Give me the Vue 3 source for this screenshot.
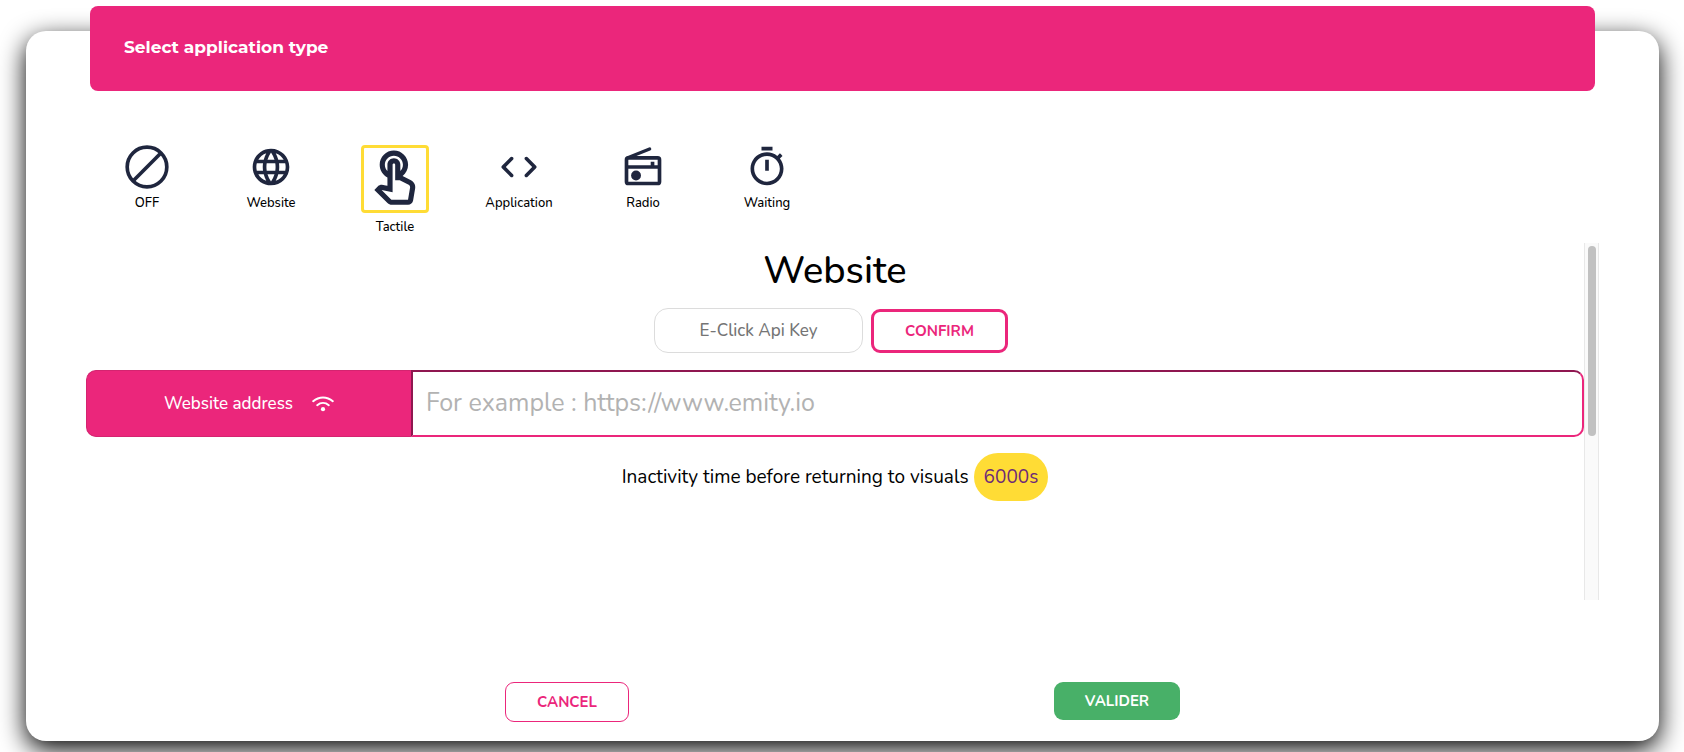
<template>
  <div class="page">
    <form class="card" @submit.prevent>
      <header class="card-header">
        <h1>Select application type</h1>
      </header>

      <nav class="types" aria-label="Application type">
        <button
          v-for="type in types"
          :key="type.label"
          type="button"
          class="type"
          :class="{ 'type--active': type.label === selected }"
          @click="selected = type.label"
        >
          <span class="type-icon">
            <svg viewBox="0 0 24 24" aria-hidden="true">
              <path v-if="type.path" :d="type.path" fill="currentColor" />
              <g v-else-if="type.label === 'OFF'" fill="none" stroke="currentColor" stroke-width="2">
                <circle cx="12" cy="12" r="10.8" />
                <path d="M4.4 19.6 19.6 4.4" />
              </g>
              <g v-else fill="none" stroke="currentColor" stroke-width="2">
                <rect x="3" y="7" width="18" height="14" rx="1" />
                <path d="M3 12h18M17.2 9.2V12" />
                <path d="M4 6.8 15.6 2.2" stroke-width="1.8" stroke-linecap="round" />
                <circle cx="8.2" cy="16.6" r="2.7" fill="currentColor" stroke="none" />
              </g>
            </svg>
          </span>
          <span class="type-label">{{ type.label }}</span>
        </button>
      </nav>

      <div class="panel">
        <div class="panel-content">
          <h2>Website</h2>

          <div class="api">
            <input v-model="apiKey" class="api-key" type="text" placeholder="E-Click Api Key" aria-label="E-Click Api Key" />
            <button type="button" class="btn btn--confirm">CONFIRM</button>
          </div>

          <div class="address">
            <label for="address" class="address-label">
              Website address
              <svg class="wifi" viewBox="0 0 22 16" aria-hidden="true">
                <g fill="none" stroke="currentColor" stroke-width="2" stroke-linecap="round">
                  <path d="M1.2 5.2C7 .1 15 .1 20.8 5.2" />
                  <path d="M5.2 9.2c3.5-3 8.1-3 11.6 0" />
                </g>
                <circle cx="11" cy="13.2" r="2.1" fill="currentColor" />
              </svg>
            </label>
            <input
              id="address"
              v-model="address"
              class="address-input"
              type="text"
              placeholder="For example : https://www.emity.io"
            />
          </div>

          <p class="inactivity">
            <span>Inactivity time before returning to visuals</span>
            <span class="pill">6000s</span>
          </p>
        </div>
        <div class="scrollbar"><div class="scrollbar-thumb"></div></div>
      </div>

      <footer class="actions">
        <button type="button" class="btn btn--cancel">CANCEL</button>
        <button type="submit" class="btn btn--valid">VALIDER</button>
      </footer>
    </form>
  </div>
</template>

<script setup>
import { ref } from 'vue'

const selected = ref('Tactile')
const apiKey = ref('')
const address = ref('')

const types = [
  { label: 'OFF' },
  {
    label: 'Website',
    path: 'M11.99 2C6.47 2 2 6.48 2 12s4.47 10 9.99 10C17.52 22 22 17.52 22 12S17.52 2 11.99 2zm6.93 6h-2.95c-.32-1.25-.78-2.45-1.38-3.56 1.84.63 3.37 1.91 4.33 3.56zM12 4.04c.83 1.2 1.48 2.53 1.91 3.96h-3.82c.43-1.43 1.08-2.76 1.91-3.96zM4.26 14C4.1 13.36 4 12.69 4 12s.1-1.36.26-2h3.38c-.08.66-.14 1.32-.14 2 0 .68.06 1.34.14 2H4.26zm.82 2h2.95c.32 1.25.78 2.45 1.38 3.56-1.84-.63-3.37-1.9-4.33-3.56zm2.95-8H5.08c.96-1.66 2.49-2.93 4.33-3.56C8.81 5.55 8.35 6.75 8.03 8zM12 19.96c-.83-1.2-1.48-2.53-1.91-3.96h3.82c-.43 1.43-1.08 2.76-1.91 3.96zM14.34 14H9.66c-.09-.66-.16-1.32-.16-2 0-.68.07-1.35.16-2h4.68c.09.65.16 1.32.16 2 0 .68-.07 1.34-.16 2zm.25 5.56c.6-1.11 1.06-2.31 1.38-3.56h2.95c-.96 1.65-2.49 2.93-4.33 3.56zM16.36 14c.08-.66.14-1.32.14-2 0-.68-.06-1.34-.14-2h3.38c.16.64.26 1.31.26 2s-.1 1.36-.26 2h-3.38z'
  },
  {
    label: 'Tactile',
    path: 'M18.19 12.44l-3.24-1.62c1.29-1 2.12-2.56 2.12-4.32 0-3.03-2.47-5.5-5.5-5.5s-5.5 2.47-5.5 5.5c0 2.13 1.22 3.98 3 4.89v3.26c-2.11-.45-2.01-.44-2.26-.44-.53 0-1.03.21-1.41.59L4 16.22l5.09 5.09c.43.44 1.03.69 1.65.69h6.3c.98 0 1.81-.7 1.97-1.67l.8-4.71c.22-1.3-.43-2.58-1.62-3.18zm-.35 2.85-.8 4.71h-6.3c-.09 0-.17-.04-.24-.1l-3.68-3.68 4.25.89V6.5c0-.28.22-.5.5-.5s.5.22.5.5v6h1.76l3.46 1.73c.4.2.62.63.55 1.06zM8.07 6.5c0-1.93 1.57-3.5 3.5-3.5s3.5 1.57 3.5 3.5c0 .95-.38 1.81-1 2.44V6.5c0-1.38-1.12-2.5-2.5-2.5s-2.5 1.12-2.5 2.5v2.44c-.62-.63-1-1.49-1-2.44z'
  },
  {
    label: 'Application',
    path: 'M8.7 15.9 4.8 12l3.9-3.9c.39-.39.39-1.01 0-1.4-.39-.39-1.01-.39-1.4 0l-4.59 4.59c-.39.39-.39 1.02 0 1.41l4.59 4.6c.39.39 1.01.39 1.4 0 .39-.39.39-1.01 0-1.4zm6.6 0 3.9-3.9-3.9-3.9c-.39-.39-.39-1.01 0-1.4.39-.39 1.01-.39 1.4 0l4.59 4.59c.39.39.39 1.02 0 1.41l-4.59 4.6c-.39.39-1.01.39-1.4 0-.39-.39-.39-1.01 0-1.4z'
  },
  { label: 'Radio' },
  {
    label: 'Waiting',
    path: 'M15 1H9v2h6V1zm-4 13h2V8h-2v6zm8.03-6.61 1.42-1.42c-.43-.51-.9-.99-1.41-1.41l-1.42 1.42C16.07 4.74 14.12 4 12 4c-4.97 0-9 4.03-9 9s4.02 9 9 9 9-4.03 9-9c0-2.12-.74-4.07-1.97-5.61zM12 20c-3.87 0-7-3.13-7-7s3.13-7 7-7 7 3.13 7 7-3.13 7-7 7z'
  }
]
</script>

<style>
body {
  background: #fff;
}
</style>

<style scoped>
.page {
  display: flex;
  min-height: 100vh;
  box-sizing: border-box;
  padding: 31px 25px 11px 26px;
  overflow: hidden;
  font-family: Nunito, Lato, sans-serif;
  font-weight: 500;
  color: #000;
}

.page *,
.page *::before {
  box-sizing: border-box;
}

.card {
  flex: 1;
  display: flex;
  flex-direction: column;
  min-width: 0;
  background: #fff;
  border-radius: 20px;
  box-shadow: 0 8px 26px #000;
}

.card-header {
  display: flex;
  align-items: center;
  height: 85px;
  margin: -25px 64px 0;
  padding: 0 34px;
  border-radius: 8px;
  background: #eb267b;
  color: #fff;
}

h1 {
  margin: 0 0 4px;
  font-family: Montserrat, "Open Sans", sans-serif;
  font-size: 17px;
  font-weight: 700;
  line-height: 24px;
}

/* Application types */
.types {
  display: flex;
  align-items: flex-start;
  height: 98px;
  margin: 54px 59px 0;
}

.type {
  display: flex;
  flex-direction: column;
  align-items: center;
  flex: 0 1 124px;
  padding: 0;
  border: 0;
  background: none;
  color: #000;
  font: inherit;
  cursor: pointer;
}

.type-icon {
  width: 44px;
  height: 44px;
  color: #1f263e;
}

.type-icon svg {
  display: block;
  width: 100%;
  height: 100%;
  overflow: visible;
}

.type--active .type-icon {
  width: 68px;
  height: 68px;
  border: 3px solid #ffdc35;
  border-radius: 4px;
}

.type-label {
  margin-top: 4px;
  font-size: 13px;
  line-height: 20px;
}

/* Settings of the selected type */
.panel {
  flex: 1;
  display: flex;
  margin: 0 60px;
}

.panel-content {
  flex: 1;
  min-width: 0;
}

h2 {
  margin: 4px 0 13px;
  font-size: 38px;
  font-weight: 500;
  line-height: 48px;
  text-align: center;
}

.api {
  display: flex;
  align-items: flex-end;
  justify-content: center;
  gap: 8px;
  height: 45px;
  padding-right: 8px;
}

.api-key {
  width: 209px;
  height: 45px;
  padding: 0 16px;
  border: 1px solid #dcdcdc;
  border-radius: 14px;
  background: #fff;
  font: inherit;
  font-size: 17px;
  text-align: center;
}

.api-key::placeholder {
  color: #757575;
}

.btn {
  border-radius: 9px;
  background: #fff;
  color: #eb267b;
  font: inherit;
  font-size: 15px;
  font-weight: 700;
  cursor: pointer;
}

.btn--confirm {
  width: 137px;
  height: 44px;
  border: 3px solid #eb267b;
}

.address {
  display: flex;
  height: 67px;
  margin-top: 17px;
}

.address-label {
  display: flex;
  align-items: center;
  justify-content: center;
  gap: 19px;
  width: 325px;
  border: 1px solid #d42470;
  border-right: 0;
  border-radius: 10px 0 0 10px;
  background: #eb267b;
  color: #fff;
  font-size: 17px;
}

.wifi {
  width: 22px;
  height: 16px;
}

.address-input {
  flex: 1;
  min-width: 0;
  padding: 0 13px 2px;
  border: 2px solid #eb267b;
  border-top-color: #8f1750;
  border-left-color: #8f1750;
  border-radius: 0 10px 10px 0;
  background: #fff;
  font: inherit;
  font-size: 25px;
  font-weight: 400;
}

.address-input::placeholder {
  color: #b2b2b2;
}

.inactivity {
  display: flex;
  align-items: center;
  justify-content: center;
  gap: 5px;
  margin: 16px 0 0;
  font-size: 19px;
  font-weight: 400;
}

.pill {
  padding: 0 10px;
  border-radius: 24px;
  background: #ffdc35;
  color: #6d2a78;
  line-height: 48px;
}

.scrollbar {
  width: 15px;
  padding: 3px;
  border: 1px solid #e8e8e8;
  border-width: 0 1px;
  background: #fafafa;
}

.scrollbar-thumb {
  width: 8px;
  height: 54%;
  border-radius: 4px;
  background: #c1c1c1;
}

/* Footer */
.actions {
  display: flex;
  align-items: flex-start;
  justify-content: space-evenly;
  margin: 82px 54px 19px;
}

.btn--cancel {
  width: 124px;
  height: 40px;
  border: 1px solid #eb267b;
}

.btn--valid {
  width: 126px;
  height: 38px;
  border: 0;
  background: #48b068;
  color: #fff;
}
</style>
